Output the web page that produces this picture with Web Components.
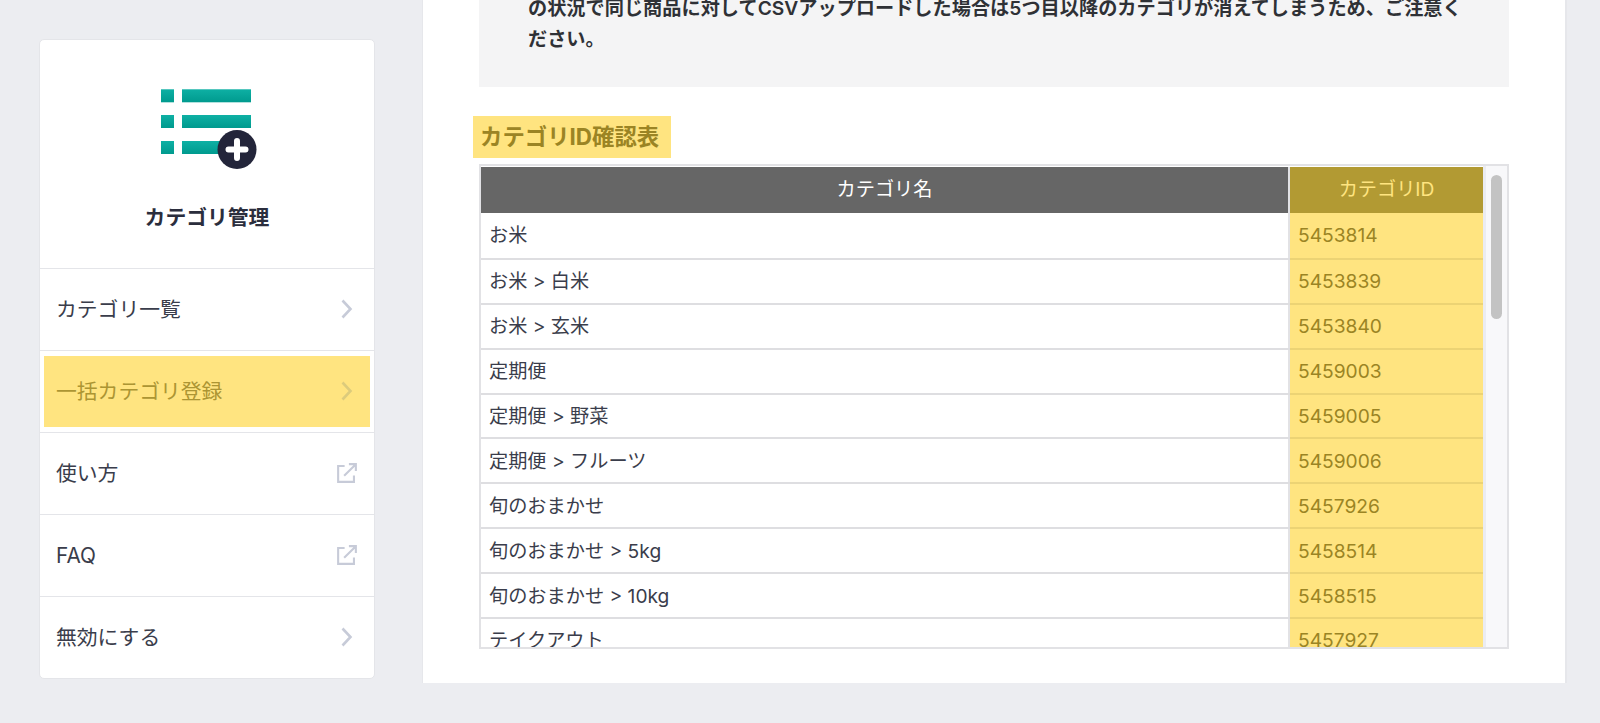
<!DOCTYPE html>
<html lang="ja">
<head>
<meta charset="utf-8">
<title>カテゴリ管理</title>
<style>
  html, body { margin: 0; height: 100%; overflow: hidden; background: #ecedf1; }
  body { font-family: Inter, "Noto Sans CJK JP", sans-serif; color: #2b2e3d; }
</style>
</head>
<body>
<help-page>
  <side-card slot="side" heading="カテゴリ管理">
    <nav-item icon="chevron">カテゴリ一覧</nav-item>
    <nav-item icon="chevron" marked>一括カテゴリ登録</nav-item>
    <nav-item icon="external">使い方</nav-item>
    <nav-item icon="external" latin>FAQ</nav-item>
    <nav-item icon="chevron">無効にする</nav-item>
  </side-card>
  <notice-box>の状況で同じ商品に対してCSVアップロードした場合は5つ目以降のカテゴリが消えてしまうため、ご注意ください。</notice-box>
  <marked-heading>カテゴリID確認表</marked-heading>
  <category-table></category-table>
</help-page>

<script>
class HelpPage extends HTMLElement {
    constructor() {
        super();
        this.attachShadow({ mode: "open" });
        this.shadowRoot.innerHTML = `
            <style>
                :host { display: flex; height: 723px; padding-left: 39px; box-sizing: border-box; align-items: flex-start; }
                .side { display: block; width: 336px; margin-top: 39px; flex: none; }
                main {
                    width: 1145px; height: 683px; margin-left: 47px; flex: none; overflow: hidden;
                    box-sizing: border-box; padding: 0 56px;
                    background: #fff; border: 1px solid #e6e7eb; border-width: 0 2px 0 1px;
                }
            </style>
            <div class="side"><slot name="side"></slot></div>
            <main><slot></slot></main>
        `;
    }
}

class SideCard extends HTMLElement {
    constructor() {
        super();
        this.attachShadow({ mode: "open" });
    }

    connectedCallback() {
        this.shadowRoot.innerHTML = `
            <style>
                :host { display: block; background: #fff; border: 1px solid #e4e5e9; border-radius: 5px; box-sizing: border-box; height: 640px; overflow: hidden; }
                header { height: 229px; box-sizing: border-box; padding-top: 48px; text-align: center; border-bottom: 1px solid #e4e5e9; }
                svg { display: block; margin: 0 auto; }
                h1 { margin: 29px 0 0; font-size: 20.8px; line-height: 30px; font-weight: 600; color: #2b2e3d; }
            </style>
            <header>
                <svg width="108" height="86" viewBox="0 0 108 86">
                    <defs>
                        <linearGradient id="teal" x1="0" y1="0" x2="0" y2="1">
                            <stop offset="0" stop-color="#0eb0a4"/>
                            <stop offset="1" stop-color="#009a8e"/>
                        </linearGradient>
                    </defs>
                    <rect x="8" y="1.3" width="13" height="13" fill="url(#teal)"/>
                    <rect x="29" y="1.3" width="69" height="13" fill="url(#teal)"/>
                    <rect x="8" y="27" width="13" height="13" fill="url(#teal)"/>
                    <rect x="29" y="27" width="69" height="13" fill="url(#teal)"/>
                    <rect x="8" y="53" width="13" height="13" fill="url(#teal)"/>
                    <rect x="29" y="53" width="50" height="13" fill="url(#teal)"/>
                    <circle cx="84" cy="61.5" r="19.5" fill="#23253a"/>
                    <path d="M84 53v17M75.5 61.5h17" stroke="#fff" stroke-width="6" stroke-linecap="round"/>
                </svg>
                <h1>${this.getAttribute("heading")}</h1>
            </header>
            <slot></slot>
        `;
    }
}

class NavItem extends HTMLElement {
    constructor() {
        super();
        this.attachShadow({ mode: "open" });
    }

    connectedCallback() {
        const icons = {
            chevron: `<svg width="24" height="24" viewBox="0 0 24 24" style="margin-right:-1px"><path d="M7.5 3.5 15.5 12l-8 8.5" fill="none" stroke="currentColor" stroke-width="2.6"/></svg>`,
            external: `<svg width="20" height="20" viewBox="0 0 21 21" style="margin-right:1px"><path d="M8 3.2H1.2v16.6h16.6V13" fill="none" stroke="currentColor" stroke-width="2.2"/><path d="M7.5 13.5 19 2M12.5 1.2h7.3v7.3" fill="none" stroke="currentColor" stroke-width="2.2"/></svg>`
        };
        this.shadowRoot.innerHTML = `
            <style>
                :host { display: block; height: 82px; box-sizing: border-box; border-bottom: 1px solid #e4e5e9; padding: 5px 4px; font-size: 20.8px; color: #3a3d4b; }
                :host(:last-child) { border-bottom: 0; }
                .row { height: 71px; display: flex; align-items: center; justify-content: space-between; padding: 0 12px; }
                .label { padding-bottom: 4px; }
                :host([latin]) .label { padding-bottom: 0; }
                svg { color: #c7cbd8; flex: none; margin-bottom: 2px; }
                :host([marked]) .row { background: #ffe480; color: #ac9533; }
                :host([marked]) svg { color: #dccb7c; }
            </style>
            <div class="row"><span class="label"><slot></slot></span>${icons[this.getAttribute("icon")]}</div>
        `;
    }
}

class NoticeBox extends HTMLElement {
    constructor() {
        super();
        this.attachShadow({ mode: "open" });
        this.shadowRoot.innerHTML = `
            <style>
                :host {
                    display: block; margin-top: -7px; padding: 0 40px 32px 49px; background: #f4f4f5;
                    font-size: 19.2px; line-height: 31px; font-weight: 600; color: #2f3136;
                }
            </style>
            <slot></slot>
        `;
    }
}

class MarkedHeading extends HTMLElement {
    constructor() {
        super();
        this.attachShadow({ mode: "open" });
        this.shadowRoot.innerHTML = `
            <style>
                :host { display: block; margin: 29px 0 6px -6px; }
                h2 {
                    display: inline-block; margin: 0; padding: 0 12px 0 7px; height: 42px; line-height: 42px;
                    background: #ffe480; color: #9b8424; font-size: 22.4px; font-weight: 700;
                }
            </style>
            <h2><slot></slot></h2>
        `;
    }
}

const CATEGORIES = [
    ["お米", "5453814"],
    ["お米 > 白米", "5453839"],
    ["お米 > 玄米", "5453840"],
    ["定期便", "5459003"],
    ["定期便 > 野菜", "5459005"],
    ["定期便 > フルーツ", "5459006"],
    ["旬のおまかせ", "5457926"],
    ["旬のおまかせ > 5kg", "5458514"],
    ["旬のおまかせ > 10kg", "5458515"],
    ["テイクアウト", "5457927"]
];

class CategoryTable extends HTMLElement {
    constructor() {
        super();
        this.attachShadow({ mode: "open" });
    }

    connectedCallback() {
        const rows = CATEGORIES.map(([name, id]) => `<tr><td>${name.replace(">", "&gt;")}</td><td class="id">${id}</td></tr>`).join("");
        this.shadowRoot.innerHTML = `
            <style>
                :host { display: flex; height: 485px; box-sizing: border-box; border: 2px solid #e2e2e5; overflow: hidden; font-size: 19.2px; }
                .scroll { flex: none; width: 1002px; overflow: hidden; }
                table { border-collapse: collapse; table-layout: fixed; width: 1002px; margin-top: 1px; }
                col.id-col { width: 194px; }
                th { height: 46px; padding: 0 0 5px; box-sizing: border-box; font-weight: 400; background: #666; color: #fff; border-right: 2px solid #e2e2e5; }
                th.id { background: #b29a33; color: #ffe480; border-right: 0; }
                td { height: 44.9px; box-sizing: border-box; padding: 0 8px 2px; color: #3a3d4b; border-bottom: 2px solid #dedee1; border-right: 2px solid #e2e2e5; }
                tr:nth-child(2) td { height: 45.9px; }
                td.id { padding: 0 8px; background: #ffe480; color: #9b8424; border-right: 0; border-bottom-color: #ecd374; }
                .track { flex: 1; background: #f8f8fa; border-left: 3px solid #ebecf1; padding: 9px 5px 0 5px; }
                .thumb { height: 144px; border-radius: 6px; background: #c3c3c3; }
            </style>
            <div class="scroll">
                <table>
                    <colgroup><col><col class="id-col"></colgroup>
                    <tr><th>カテゴリ名</th><th class="id">カテゴリID</th></tr>
                    ${rows}
                </table>
            </div>
            <div class="track"><div class="thumb"></div></div>
        `;
    }
}

customElements.define("help-page", HelpPage);
customElements.define("side-card", SideCard);
customElements.define("nav-item", NavItem);
customElements.define("notice-box", NoticeBox);
customElements.define("marked-heading", MarkedHeading);
customElements.define("category-table", CategoryTable);
</script>
</body>
</html>
